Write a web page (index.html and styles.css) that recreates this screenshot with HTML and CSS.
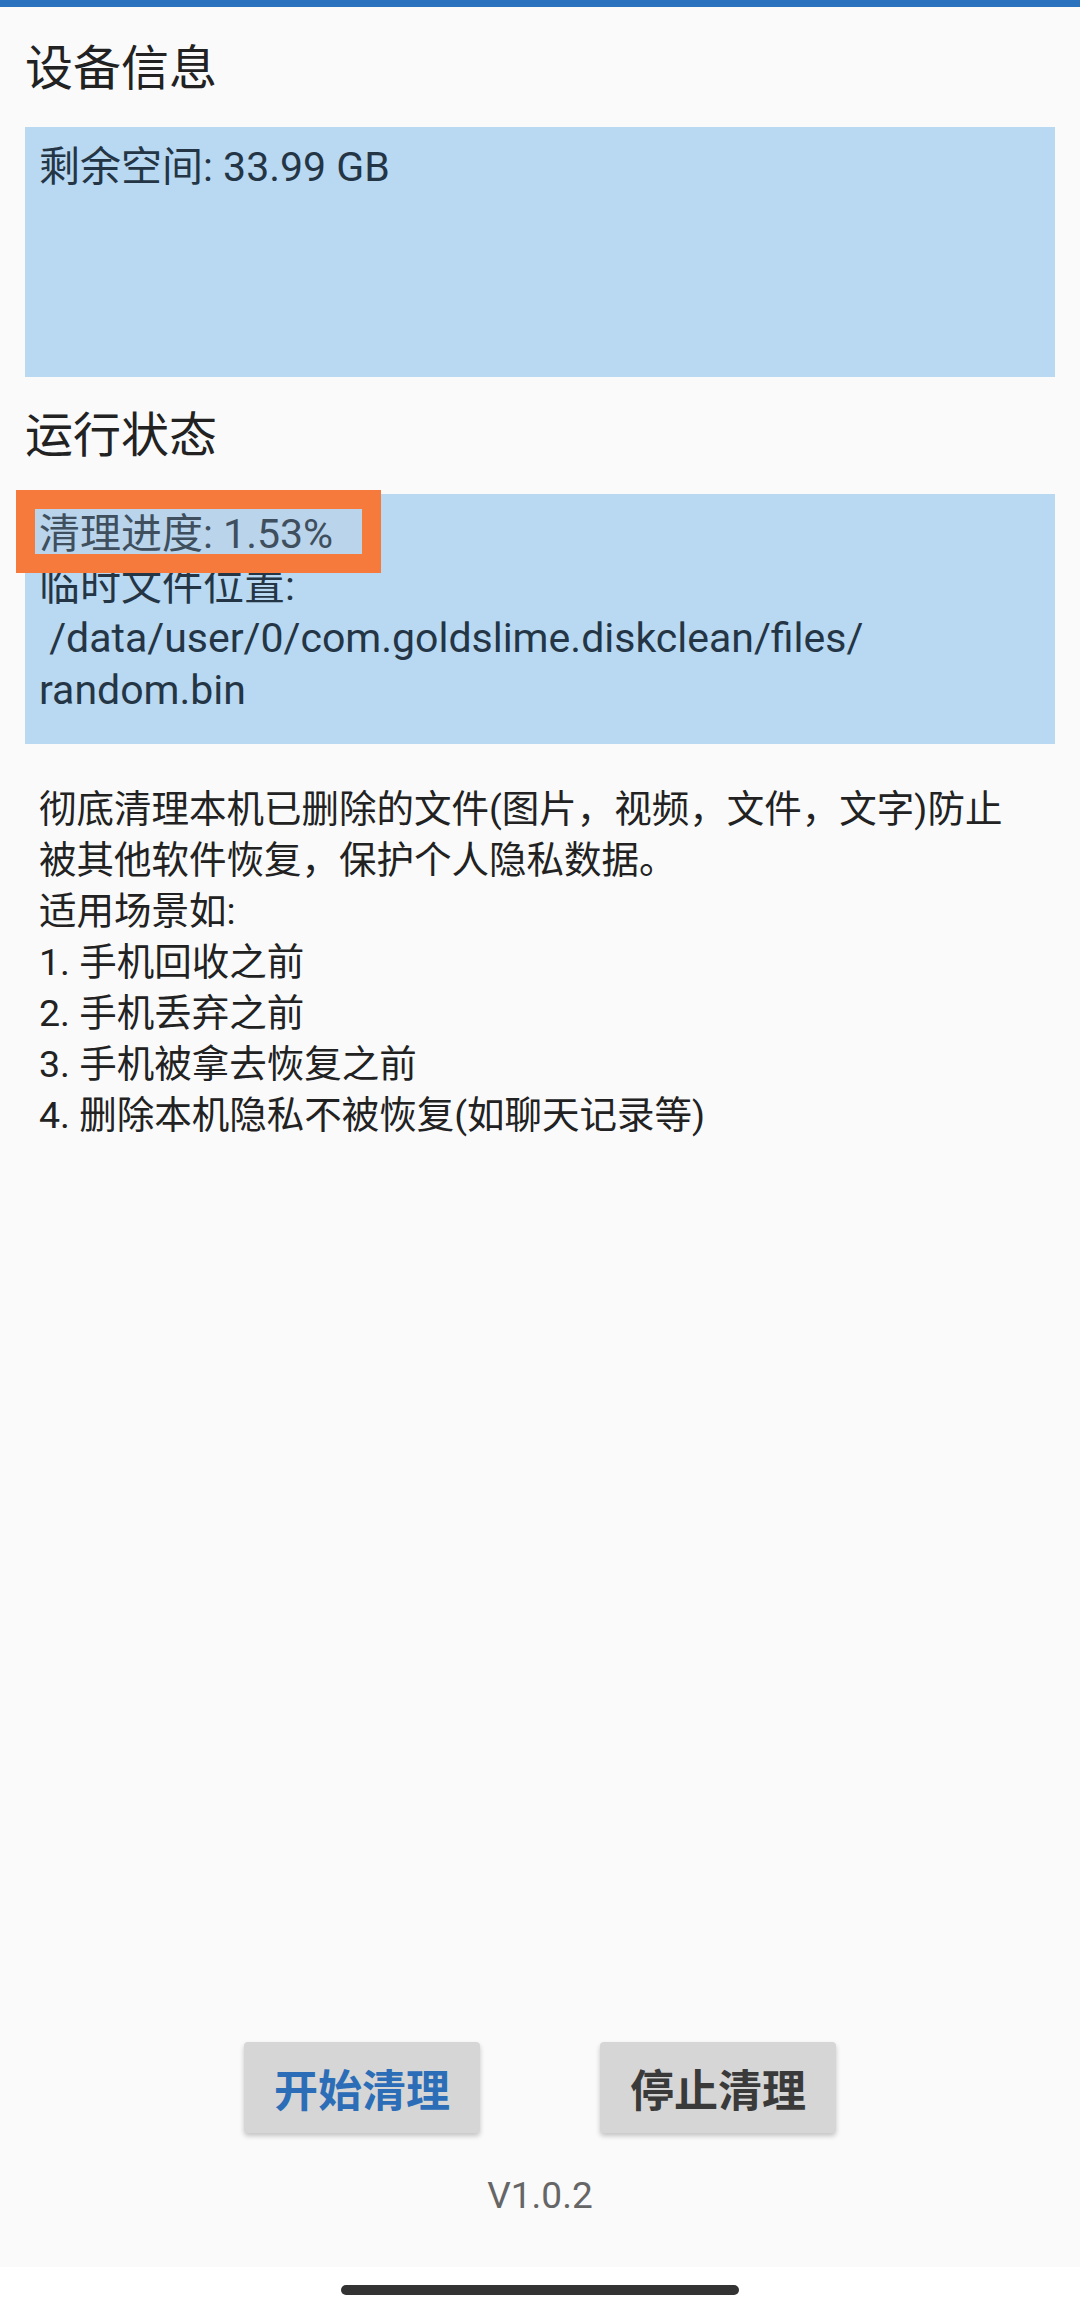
FILE: index.html
```html
<!DOCTYPE html>
<html>
<head>
  <meta charset="utf-8">
  <link rel="stylesheet" href="styles.css">
</head>
<body>
  <div class="screen">
    <div class="status-strip"></div>

    <main class="content">
      <section class="panel">
        <h2 class="panel-title">设备信息</h2>
        <div class="info-box">剩余空间: 33.99 GB</div>
      </section>

      <section class="panel">
        <h2 class="panel-title">运行状态</h2>
        <div class="info-box status-box">
          <div class="highlight"></div>
          清理进度: 1.53%<br>
          临时文件位置:<br>
          &nbsp;/data/user/0/com.goldslime.diskclean/files/<br>
          random.bin
        </div>
      </section>

      <p class="intro">
        彻底清理本机已删除的文件(图片，视频，文件，文字)防止<br>
        被其他软件恢复，保护个人隐私数据。<br>
        适用场景如:<br>
        1. 手机回收之前<br>
        2. 手机丢弃之前<br>
        3. 手机被拿去恢复之前<br>
        4. 删除本机隐私不被恢复(如聊天记录等)
      </p>

      <div class="spacer"></div>

      <div class="actions">
        <button class="action-btn start">开始清理</button>
        <button class="action-btn stop">停止清理</button>
      </div>

      <div class="version">V1.0.2</div>
    </main>

    <div class="nav-bar"><span class="nav-pill"></span></div>
  </div>
</body>
</html>
```

FILE: styles.css
```css
body {
  margin: 0;
  background: #ffffff;
  font-family: Roboto, "Noto Sans CJK SC", sans-serif;
}

.screen {
  display: flex;
  flex-direction: column;
  min-height: 2313px;
}

.status-strip {
  height: 7px;
  background: #2a72be;
}

.content {
  flex: 1;
  display: flex;
  flex-direction: column;
  padding: 30px 25px 0;
  background: #fafafb;
}

.panel + .panel {
  margin-top: 27px;
}

.panel-title {
  margin: 0 0 26px;
  font-size: 48px;
  line-height: 64px;
  font-weight: 400;
  color: #222;
}

.info-box {
  position: relative;
  min-height: 250px;
  box-sizing: border-box;
  padding: 14px 14px;
  background: #b9d8f2;
  color: #243645;
  font-size: 41px;
  line-height: 52px;
}

.highlight {
  position: absolute;
  left: -9px;
  top: -4px;
  width: 365px;
  height: 83px;
  box-sizing: border-box;
  border: 19px solid #f57a3c;
  background: rgba(190, 196, 204, 0.18);
}

.intro {
  margin: 40px 0 0;
  padding: 0 14px;
  font-size: 37.5px;
  line-height: 51px;
  color: #222;
}

.spacer {
  flex: 1;
}

.actions {
  display: flex;
  justify-content: center;
  gap: 120px;
}

.action-btn {
  width: 236px;
  height: 91px;
  border: none;
  border-radius: 4px;
  background: #d6d6d6;
  box-shadow: 0 3px 5px rgba(0, 0, 0, 0.22);
  font-family: Roboto, "Noto Sans CJK SC", sans-serif;
  font-size: 44px;
  font-weight: 700;
  padding: 0;
}

.action-btn.start {
  color: #2c6db8;
}

.action-btn.stop {
  color: #3a3a3a;
}

.version {
  margin-top: 38px;
  padding-bottom: 46px;
  text-align: center;
  font-size: 37px;
  line-height: 50px;
  color: #666;
}

.nav-bar {
  height: 46px;
  display: flex;
  justify-content: center;
  align-items: center;
  background: #ffffff;
}

.nav-pill {
  width: 398px;
  height: 10px;
  border-radius: 5px;
  background: #333;
}
```
